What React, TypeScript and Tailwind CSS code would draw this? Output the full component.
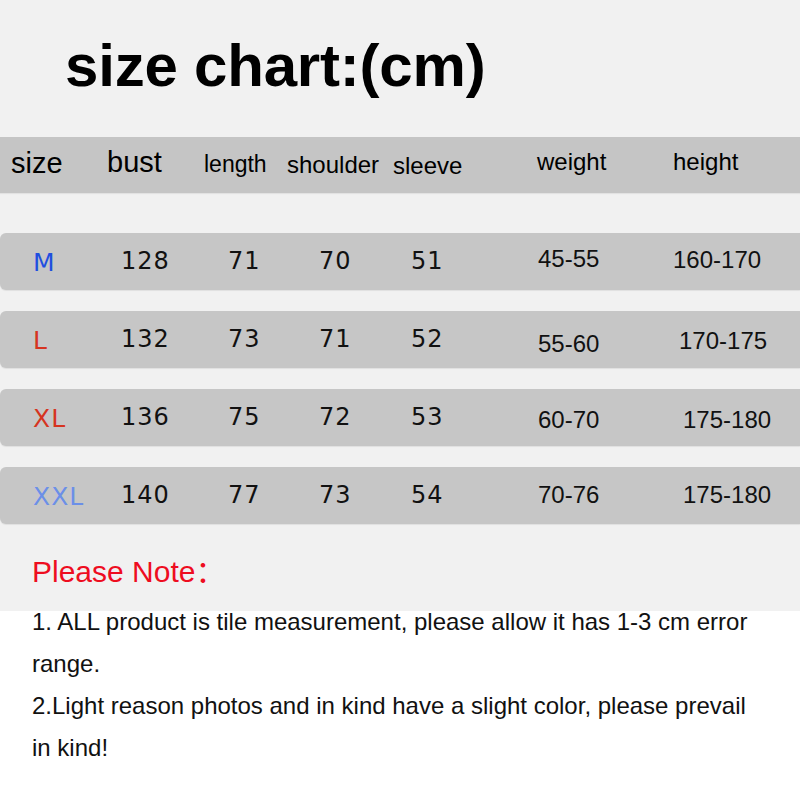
const rows = [
  {
    size: "M",
    color: "text-[#1f4fe0]",
    bust: "128",
    length: "71",
    shoulder: "70",
    sleeve: "51",
    weight: "45-55",
    weightPad: "pt-[14px]",
    height: "160-170",
    heightPad: "pt-[15px] pl-0",
  },
  {
    size: "L",
    color: "text-[#d6341f]",
    bust: "132",
    length: "73",
    shoulder: "71",
    sleeve: "52",
    weight: "55-60",
    weightPad: "pt-[21px]",
    height: "170-175",
    heightPad: "pt-[18px] pl-[6px]",
  },
  {
    size: "XL",
    color: "text-[#d6341f]",
    bust: "136",
    length: "75",
    shoulder: "72",
    sleeve: "53",
    weight: "60-70",
    weightPad: "pt-[19px]",
    height: "175-180",
    heightPad: "pt-[19px] pl-[10px]",
  },
  {
    size: "XXL",
    color: "text-[#6b8fe8]",
    bust: "140",
    length: "77",
    shoulder: "73",
    sleeve: "54",
    weight: "70-76",
    weightPad: "pt-[16px]",
    height: "175-180",
    heightPad: "pt-[16px] pl-[10px]",
  },
];

const arial = "font-['Liberation_Sans','Noto_Sans_CJK_SC',sans-serif]";
const dejavu = "font-['DejaVu_Sans',sans-serif]";

export default function App() {
  return (
    <div className={`w-[800px] min-h-[800px] bg-white text-black ${arial}`}>
      <div className="bg-[#f1f1f1] pt-[36px] pb-[24px]">
        <h1 className="pl-[65px] text-[60px] font-bold leading-none tracking-[-0.2px]">size chart:(cm)</h1>

        {/* header bar */}
        <div className="mt-[41px] h-[56px] bg-[#c5c5c5] pl-[11px] grid grid-cols-[96px_97px_83px_106px_144px_136px_1fr] items-start leading-none shadow-[0_1px_1px_rgba(0,0,0,0.06)]">
          <div className="pt-[12px] text-[29px]">size</div>
          <div className="pt-[11px] text-[29px]">bust</div>
          <div className="pt-[16px] text-[23px]">length</div>
          <div className="pt-[16px] text-[24px]">shoulder</div>
          <div className="pt-[17px] text-[24px]">sleeve</div>
          <div className="pt-[13px] text-[24px]">weight</div>
          <div className="pt-[13px] text-[24px]">height</div>
        </div>

        <div className="mt-[40px] flex flex-col gap-[21px]">
          {rows.map((r) => (
            <div
              key={r.size}
              className="h-[57px] bg-[#c6c6c6] rounded-l-md pl-[33px] grid grid-cols-[88px_107px_91px_92px_127px_135px_1fr] items-start leading-none text-[#111] shadow-[0_1px_1px_rgba(0,0,0,0.07)]"
            >
              <div className={`pt-[17px] text-[25px] tracking-[1px] ${dejavu} ${r.color}`}>{r.size}</div>
              <div className={`pt-[16px] text-[24px] tracking-[1px] ${dejavu}`}>{r.bust}</div>
              <div className={`pt-[16px] text-[24px] tracking-[1px] ${dejavu}`}>{r.length}</div>
              <div className={`pt-[16px] text-[24px] tracking-[1px] ${dejavu}`}>{r.shoulder}</div>
              <div className={`pt-[16px] text-[24px] tracking-[1px] ${dejavu}`}>{r.sleeve}</div>
              <div className={`text-[24px] ${r.weightPad}`}>{r.weight}</div>
              <div className={`text-[24px] ${r.heightPad}`}>{r.height}</div>
            </div>
          ))}
        </div>

        <div className="mt-[33px] pl-[32px] text-[30px] leading-none text-[#ee0d1f]">Please Note：</div>
      </div>

      <div className="flex flex-col pl-[32px]">
        <div className="-mt-[10px] w-[725px] text-[24px] leading-[42px] text-[#111]">
          <p>1. ALL product is tile measurement, please allow it has 1-3 cm error range.</p>
          <p>2.Light reason photos and in kind have a slight color, please prevail in kind!</p>
        </div>
      </div>
    </div>
  );
}
